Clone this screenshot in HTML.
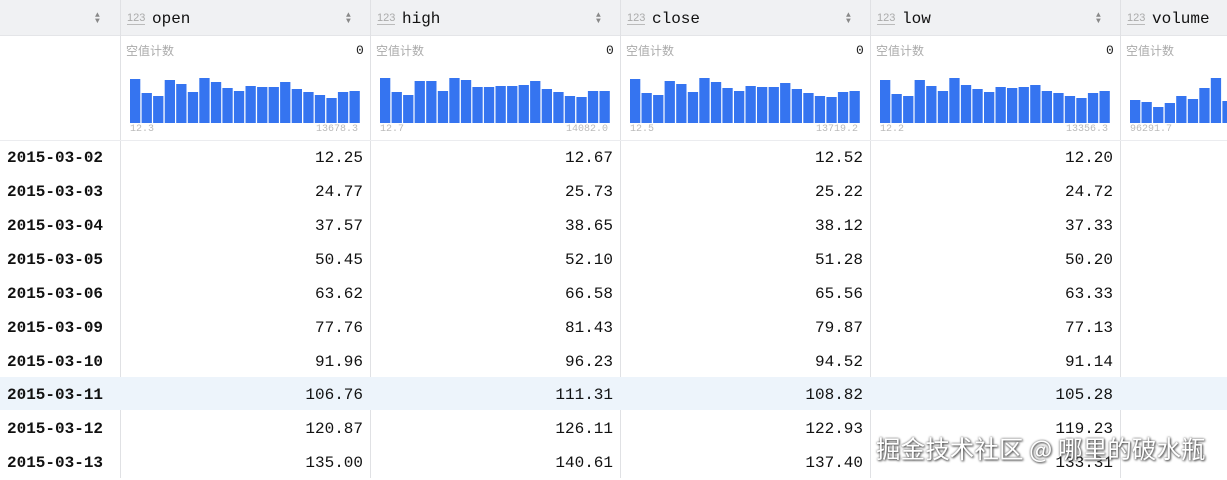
<!DOCTYPE html>
<html><head><meta charset="utf-8"><style>
*{margin:0;padding:0;box-sizing:border-box}
body{width:1227px;height:478px;overflow:hidden;background:#fff;font-family:"Liberation Mono",monospace;position:relative}
.hdr{position:absolute;left:0;top:0;width:1227px;height:36px;background:#f0f1f3;border-bottom:1px solid #e4e5e8}
.vl{position:absolute;top:36px;bottom:0;width:1px;background:#ebecef}
.hl{position:absolute;left:0;width:1227px;height:1px;background:#ebecef}
.hn{position:absolute;top:10px;font-size:16px;color:#111}
.ic{position:absolute;top:12px;font-size:11px;color:#aaa;border-bottom:1px solid #bbb;line-height:12px;font-family:"Liberation Sans",sans-serif}
.sort{position:absolute;top:13px;font-size:8px;color:#888;line-height:6px}
.nl{position:absolute;top:42px;font-size:12px;color:#aaa;font-family:"Noto Sans CJK SC",sans-serif}
.z{position:absolute;top:43px;font-size:13px;color:#222}
.mn{position:absolute;top:124px;font-size:10px;color:#bbb}
.row{position:absolute;left:0;width:1227px;height:34px;font-size:16px;color:#111}
.row span{position:absolute;top:8px}
.d{left:7px;font-weight:bold}
.c1{right:864px}.c2{right:614px}.c3{right:364px}.c4{right:114px}
svg{position:absolute}
.wm{position:absolute;left:876px;top:431px;font-size:24.5px;color:#fff;font-family:"Noto Sans CJK SC",sans-serif;text-shadow:0 0 2px #555,1px 1px 2px #444;letter-spacing:0.1px}
</style></head><body>
<div class="hdr"></div>
<div class="vl" style="left:120px;top:0;background:#e0e1e4"></div>
<div class="vl" style="left:370px;top:0;background:#e0e1e4"></div>
<div class="vl" style="left:620px;top:0;background:#e0e1e4"></div>
<div class="vl" style="left:870px;top:0;background:#e0e1e4"></div>
<div class="vl" style="left:1120px;top:0;background:#e0e1e4"></div>
<div class="sort" style="left:95px">▲<br>▼</div>
<div class="ic" style="left:127px">123</div><div class="hn" style="left:152px">open</div><div class="sort" style="left:346px">▲<br>▼</div>
<div class="ic" style="left:377px">123</div><div class="hn" style="left:402px">high</div><div class="sort" style="left:596px">▲<br>▼</div>
<div class="ic" style="left:627px">123</div><div class="hn" style="left:652px">close</div><div class="sort" style="left:846px">▲<br>▼</div>
<div class="ic" style="left:877px">123</div><div class="hn" style="left:902px">low</div><div class="sort" style="left:1096px">▲<br>▼</div>
<div class="ic" style="left:1127px">123</div><div class="hn" style="left:1152px">volume</div>

<div class="nl" style="left:126px">空值计数</div><div class="z" style="left:356px">0</div>
<div class="nl" style="left:376px">空值计数</div><div class="z" style="left:606px">0</div>
<div class="nl" style="left:626px">空值计数</div><div class="z" style="left:856px">0</div>
<div class="nl" style="left:876px">空值计数</div><div class="z" style="left:1106px">0</div>
<div class="nl" style="left:1126px">空值计数</div>
<div class="mn" style="left:130px">12.3</div><div class="mn" style="left:316px">13678.3</div>
<div class="mn" style="left:380px">12.7</div><div class="mn" style="left:566px">14082.0</div>
<div class="mn" style="left:630px">12.5</div><div class="mn" style="left:816px">13719.2</div>
<div class="mn" style="left:880px">12.2</div><div class="mn" style="left:1066px">13356.3</div>
<div class="mn" style="left:1130px">96291.7</div>

<svg id="bars" width="1227" height="140" style="left:0;top:0"></svg>

<div class="hl" style="top:140px"></div>
<div style="position:absolute;left:0;top:377px;width:1227px;height:33px;background:#edf4fb"></div>

<div class="row" style="top:141px"><span class="d">2015-03-02</span><span class="c1">12.25</span><span class="c2">12.67</span><span class="c3">12.52</span><span class="c4">12.20</span></div>
<div class="row" style="top:175px"><span class="d">2015-03-03</span><span class="c1">24.77</span><span class="c2">25.73</span><span class="c3">25.22</span><span class="c4">24.72</span></div>
<div class="row" style="top:209px"><span class="d">2015-03-04</span><span class="c1">37.57</span><span class="c2">38.65</span><span class="c3">38.12</span><span class="c4">37.33</span></div>
<div class="row" style="top:243px"><span class="d">2015-03-05</span><span class="c1">50.45</span><span class="c2">52.10</span><span class="c3">51.28</span><span class="c4">50.20</span></div>
<div class="row" style="top:277px"><span class="d">2015-03-06</span><span class="c1">63.62</span><span class="c2">66.58</span><span class="c3">65.56</span><span class="c4">63.33</span></div>
<div class="row" style="top:311px"><span class="d">2015-03-09</span><span class="c1">77.76</span><span class="c2">81.43</span><span class="c3">79.87</span><span class="c4">77.13</span></div>
<div class="row" style="top:345px"><span class="d">2015-03-10</span><span class="c1">91.96</span><span class="c2">96.23</span><span class="c3">94.52</span><span class="c4">91.14</span></div>
<div class="row" style="top:378px"><span class="d">2015-03-11</span><span class="c1">106.76</span><span class="c2">111.31</span><span class="c3">108.82</span><span class="c4">105.28</span></div>
<div class="row" style="top:412px"><span class="d">2015-03-12</span><span class="c1">120.87</span><span class="c2">126.11</span><span class="c3">122.93</span><span class="c4">119.23</span></div>
<div class="row" style="top:446px"><span class="d">2015-03-13</span><span class="c1">135.00</span><span class="c2">140.61</span><span class="c3">137.40</span><span class="c4">133.31</span></div>

<div class="wm">掘金技术社区 @ 哪里的破水瓶</div>

<script>
var H={130:[44,30,27,43,39,31,45,41,35,32,37,36,36,41,34,31,28,25,31,32],
380:[45,31,28,42,42,32,45,43,36,36,37,37,38,42,34,31,27,26,32,32],
630:[44,30,28,42,39,31,45,41,35,32,37,36,36,40,34,30,27,26,31,32],
880:[43,29,27,43,37,32,45,38,34,31,36,35,36,38,32,30,27,25,30,32],
1130:[23,21,16,20,27,24,35,45,22,20]};
var s='';
for(var k in H){var a=H[k];for(var i=0;i<a.length;i++){var x=+k+i*11.55;if(x>1227)break;s+='<rect x="'+x.toFixed(1)+'" y="'+(123-a[i])+'" width="10.3" height="'+a[i]+'" fill="#3574f0"/>';}}
document.getElementById('bars').innerHTML=s;
</script>
</body></html>
